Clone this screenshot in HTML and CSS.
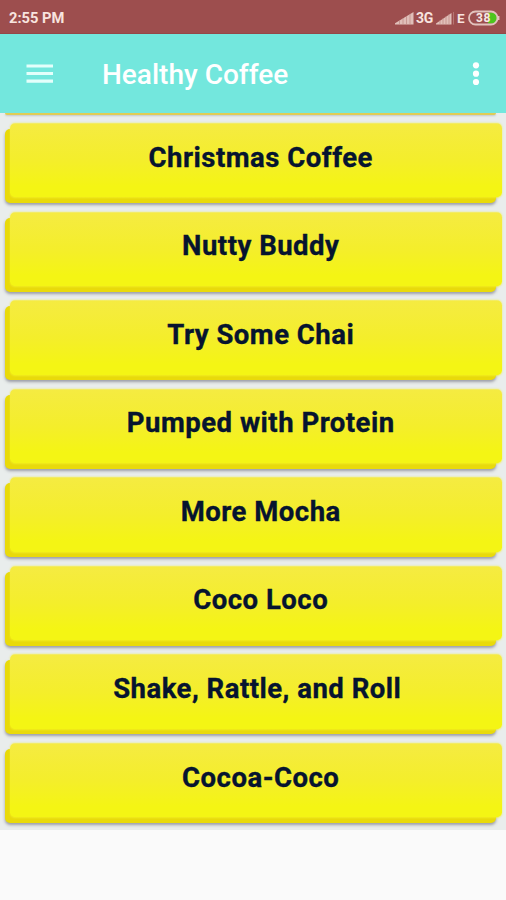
FILE: index.html
```html
<!DOCTYPE html>
<html lang="en">
<head>
<meta charset="utf-8">
<title>Healthy Coffee</title>
<link rel="stylesheet" href="styles.css">
</head>
<body>
<div class="status">
  <span class="time">2:55 PM</span>
  <svg class="signal" width="19" height="14" viewBox="0 0 19 14"><path d="M0 13.500V12.300L18.500 1V13.500Z" fill="#e0bfb9"/><path d="M4.500 9V14M8 7V14M11.500 5V14M15 3V14" stroke="#bd8783" stroke-width=".7"/></svg>
  <span class="net">3G</span>
  <svg class="signal2" width="19" height="14" viewBox="0 0 19 14"><path d="M0 13.500V12.500L15.500 2V13.500Z" fill="#e0bfb9"/><path d="M4 9V14M7 7V14M10 5V14M13 3V14" stroke="#bd8783" stroke-width=".7"/><path d="M17.500 1V13.500" stroke="#b67773" stroke-width="1"/></svg>
  <span class="edge">E</span>
  <svg class="battery" width="32" height="16" viewBox="0 0 32 16"><path d="M20 2.500H24A5.500 5.500 0 0 1 24 13.500H20Z" fill="#4cc51c"/><rect x="1" y="1.500" width="28.500" height="13" rx="6.500" fill="none" stroke="#e2c2bd" stroke-width="1.800"/><path d="M30.700 6V10" stroke="#e2c2bd" stroke-width="1.500"/><text x="15.500" y="12.300" text-anchor="middle">38</text></svg>
</div>
<header class="appbar">
  <svg class="menu" width="28" height="20" viewBox="0 0 28 20"><path d="M.5 2H27M.5 9.500H27M.5 17.200H27" stroke="#e4fffb" stroke-width="3.200"/></svg>
  <h1>Healthy Coffee</h1>
  <svg class="more" width="8" height="24" viewBox="0 0 8 24"><circle cx="4" cy="3.300" r="3.100"/><circle cx="4" cy="11.700" r="3.100"/><circle cx="4" cy="20" r="3.100"/></svg>
</header>
<main class="list">
  <div class="card prev"></div>
  <div class="card"><span class="face">Christmas Coffee</span></div>
  <div class="card"><span class="face">Nutty Buddy</span></div>
  <div class="card"><span class="face">Try Some Chai</span></div>
  <div class="card"><span class="face">Pumped with Protein</span></div>
  <div class="card"><span class="face">More Mocha</span></div>
  <div class="card"><span class="face">Coco Loco</span></div>
  <div class="card"><span class="face wide">Shake, Rattle, and Roll</span></div>
  <div class="card"><span class="face">Cocoa-Coco</span></div>
</main>
</body>
</html>
```
FILE: styles.css
```css
* { box-sizing: border-box; }
body {
  margin: 0;
  height: 900px;
  overflow: hidden;
  background: #fafafa;
  font-family: Roboto, "Liberation Sans", sans-serif;
}
.status {
  height: 34px;
  display: flex;
  align-items: center;
  padding: 2px 6px 0 9px;
  background: #9d4e4e;
  border-bottom: 1px solid #934848;
  color: #f8e4df;
  font-weight: 700;
}
.time { flex: 1; font-size: 14.7px; }
.net { width: 18px; margin: 0 2px; font-size: 14px; letter-spacing: -.3px; }
.edge { width: 8px; margin: 0 3px 0 2px; font-size: 13.5px; }
.battery text { font: 700 12px Roboto, sans-serif; fill: #f8e8e4; letter-spacing: .5px; }
.appbar {
  height: 79px;
  display: flex;
  align-items: center;
  padding: 0 26px;
  background: #73e7dd;
}
.menu { margin-top: 1px; }
h1 {
  flex: 1;
  margin: 2px 0 0 48px;
  color: #fff;
  font-size: 28px;
  font-weight: 500;
  line-height: 36px;
}
.more { fill: #fff; }
.list {
  height: 717px;
  overflow: hidden;
  background: #e9edec;
}
.card {
  width: 490.500px;
  height: 74px;
  margin: 0 0 14.570px 5px;
  border-radius: 5px;
  background: #e9da0a;
  box-shadow: 0 2px 3px rgba(80, 80, 100, .5);
}
.prev {
  height: 2px;
  margin-bottom: 13.970px;
  border-radius: 0 0 4px 4px;
  background: #dfcc55;
  box-shadow: 0 1px 2px rgba(80, 80, 100, .25);
}
.face {
  display: flex;
  justify-content: center;
  width: 492px;
  height: 74.500px;
  padding: 16.700px 0 0 9.500px;
  border-radius: 5px;
  background: linear-gradient(#f5eb42, #f4ee2b 50%, #f4f514 85%);
  color: #06142f;
  font-size: 27.500px;
  font-weight: 700;
  line-height: 36px;
  letter-spacing: .5px;
  -webkit-text-stroke: .35px #06142f;
  transform: translate(5px, -5.700px);
  box-shadow: 0 0 2px rgba(244, 240, 50, .8);
}
.wide { padding-left: 2.500px; }
```
